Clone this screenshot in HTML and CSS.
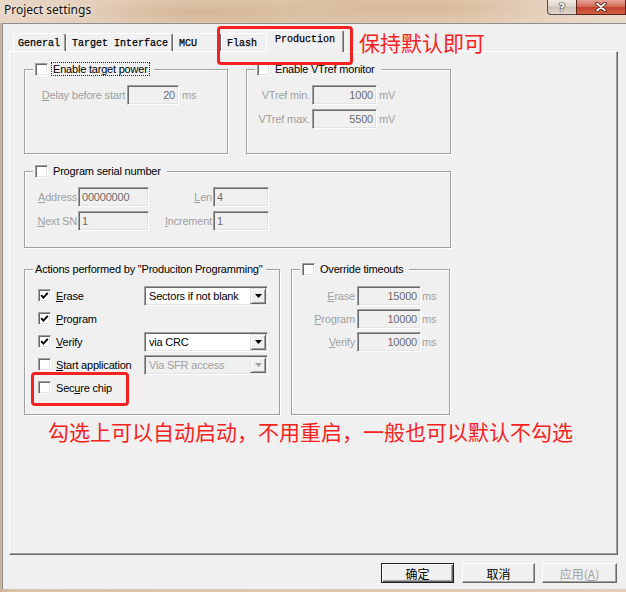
FILE: index.html
```html
<!DOCTYPE html>
<html>
<head>
<meta charset="utf-8">
<title>Project settings</title>
<link rel="stylesheet" href="styles.css">
</head>
<body>
<div class="window">
  <div class="titlebar">
    <span class="title">Project settings</span>
    <div class="caption">
      <span class="cap help">?</span>
      <span class="cap close">
        <svg width="14" height="10" viewBox="0 0 14 10"><path d="M3 1.5 L11 8.5 M11 1.5 L3 8.5" stroke="#4a1a12" stroke-width="3.6" stroke-linecap="round"/><path d="M3 1.5 L11 8.5 M11 1.5 L3 8.5" stroke="#fff" stroke-width="1.8" stroke-linecap="round"/></svg>
      </span>
    </div>
  </div>
  <div class="client">
    <div class="tabstrip">
      <span class="tab t-general">General</span>
      <span class="tab t-target">Target Interface</span>
      <span class="tab t-mcu">MCU</span>
      <span class="mark">
        <span class="tab t-flash">Flash</span>
        <span class="tab t-prod active">Production</span>
        <span class="note-tab">保持默认即可</span>
      </span>
    </div>
    <div class="panel">
      <div class="grow row-a">
        <fieldset class="group g-power">
          <legend><span class="cb"></span><span class="lg focus">Enable target power</span></legend>
          <div class="gbody b-top">
            <div class="field">
              <span class="lbl dis w100"><u>D</u>elay before start</span>
              <span class="edit w52">20</span>
              <span class="unit dis u3">ms</span>
            </div>
          </div>
        </fieldset>
        <fieldset class="group g-vtref">
          <legend><span class="cb"></span><span class="lg">Enable VTref monitor</span></legend>
          <div class="gbody b-top stack">
            <div class="field">
              <span class="lbl dis w63">VTref min.</span>
              <span class="edit w65">1000</span>
              <span class="unit dis u2">mV</span>
            </div>
            <div class="field">
              <span class="lbl dis w63">VTref max.</span>
              <span class="edit w65">5500</span>
              <span class="unit dis u2">mV</span>
            </div>
          </div>
        </fieldset>
      </div>

      <div class="grow row-b">
        <fieldset class="group g-serial">
          <legend><span class="cb"></span><span class="lg">Program serial number</span></legend>
          <div class="gbody b-serial stack">
            <div class="field">
              <span class="lbl dis w52 m1"><u>A</u>ddress</span>
              <span class="edit w71 left">00000000</span>
              <span class="lbl dis w63 m1"><u>L</u>en</span>
              <span class="edit w56 left">4</span>
            </div>
            <div class="field">
              <span class="lbl dis w52 m1"><u>N</u>ext SN</span>
              <span class="edit w71 left">1</span>
              <span class="lbl dis w63 m1"><u>I</u>ncrement</span>
              <span class="edit w56 left">1</span>
            </div>
          </div>
        </fieldset>
      </div>

      <div class="grow row-c">
        <fieldset class="group g-actions">
          <legend class="plain"><span class="lg">Actions performed by "Produciton Programming"</span></legend>
          <div class="gbody b-actions">
            <div class="act-row">
              <span class="cb"><svg width="9" height="9" viewBox="0 0 9 9"><path d="M1.2 4.2 L3.4 6.6 L7.8 1.8" fill="none" stroke="#000" stroke-width="1.9"/></svg></span>
              <span class="act-label"><u>E</u>rase</span>
              <span class="combo"><span class="ctext">Sectors if not blank</span><span class="dropbtn"><svg width="7" height="4" viewBox="0 0 7 4"><path d="M0 0 H7 L3.5 4 Z" fill="#000"/></svg></span></span>
            </div>
            <div class="act-row">
              <span class="cb"><svg width="9" height="9" viewBox="0 0 9 9"><path d="M1.2 4.2 L3.4 6.6 L7.8 1.8" fill="none" stroke="#000" stroke-width="1.9"/></svg></span>
              <span class="act-label"><u>P</u>rogram</span>
            </div>
            <div class="act-row">
              <span class="cb"><svg width="9" height="9" viewBox="0 0 9 9"><path d="M1.2 4.2 L3.4 6.6 L7.8 1.8" fill="none" stroke="#000" stroke-width="1.9"/></svg></span>
              <span class="act-label"><u>V</u>erify</span>
              <span class="combo"><span class="ctext">via CRC</span><span class="dropbtn"><svg width="7" height="4" viewBox="0 0 7 4"><path d="M0 0 H7 L3.5 4 Z" fill="#000"/></svg></span></span>
            </div>
            <div class="act-row">
              <span class="cb"></span>
              <span class="act-label"><u>S</u>tart application</span>
              <span class="combo disabled"><span class="ctext">Via SFR access</span><span class="dropbtn"><svg width="7" height="4" viewBox="0 0 7 4"><path d="M0 0 H7 L3.5 4 Z" fill="#a0a0a0"/></svg></span></span>
            </div>
            <div class="act-row">
              <span class="secure">
                <span class="cb"></span>
                <span class="act-label">Sec<u>u</u>re chip</span>
              </span>
            </div>
          </div>
        </fieldset>
        <fieldset class="group g-timeouts">
          <legend><span class="cb"></span><span class="lg">Override timeouts</span></legend>
          <div class="gbody b-timeouts stack3">
            <div class="field">
              <span class="lbl dis w63"><u>E</u>rase</span>
              <span class="edit w64">15000</span>
              <span class="unit dis u1">ms</span>
            </div>
            <div class="field">
              <span class="lbl dis w63"><u>P</u>rogram</span>
              <span class="edit w64">10000</span>
              <span class="unit dis u1">ms</span>
            </div>
            <div class="field">
              <span class="lbl dis w63"><u>V</u>erify</span>
              <span class="edit w64">10000</span>
              <span class="unit dis u1">ms</span>
            </div>
          </div>
        </fieldset>
      </div>

      <p class="note-big">勾选上可以自动启动，不用重启，一般也可以默认不勾选</p>
    </div>
    <div class="btns">
      <span class="btn default">确定</span>
      <span class="btn b-cancel">取消</span>
      <span class="btn b-apply dis">应用(<u>A</u>)</span>
    </div>
  </div>
</div>
</body>
</html>
```

FILE: styles.css
```css
* { box-sizing: border-box; }

html, body {
  margin: 0;
  padding: 0;
}

body {
  width: 626px;
  height: 592px;
  overflow: hidden;
  background: #dcc6ad;
  font-family: "Liberation Sans", Arial, sans-serif;
  font-size: 11px;
  color: #000;
}

.window {
  width: 626px;
  height: 592px;
  background: linear-gradient(90deg, #cbb39a 0%, #d9c2a8 2%, #e2cdb6 100%);
}

/* ---------- title bar ---------- */
.titlebar {
  height: 23px;
  display: flex;
  align-items: flex-start;
  background:
    radial-gradient(ellipse 120px 14px at 200px 12px, rgba(200,160,120,.45), transparent),
    radial-gradient(ellipse 140px 16px at 420px 8px, rgba(205,165,125,.45), transparent),
    linear-gradient(90deg, #e8d7c6 0%, #e0c9b1 25%, #dcc2a6 50%, #e2cbb3 75%, #eadbcc 100%);
}

.title {
  font-family: "Noto Sans", "Open Sans", sans-serif;
  font-size: 12px;
  line-height: 16px;
  padding: 2px 0 0 4px;
  color: #151515;
  text-shadow: 0 0 6px rgba(255,255,255,.85);
}

.caption {
  margin-left: auto;
  display: flex;
}

.cap {
  height: 15px;
  display: flex;
  align-items: center;
  justify-content: center;
  border: 1px solid #5b4d43;
  border-top: none;
}

.help {
  width: 29px;
  border-right: none;
  border-radius: 0 0 0 4px;
  background: linear-gradient(#f1ebe5, #ddd3ca 48%, #cfc3b8 52%, #dfd5cc);
  color: #fff;
  font-family: "DejaVu Sans", sans-serif;
  font-weight: bold;
  font-size: 11px;
  line-height: 11px;
  text-shadow: 0 0 1px #222, 0 0 1px #222, 0 0 2px #444;
}

.close {
  width: 50px;
  border-color: #5a2219;
  background: linear-gradient(#e6a396, #d56e5c 45%, #c4432f 52%, #d2623f);
}

/* ---------- client ---------- */
.client {
  margin-left: 2px;
  width: 624px;
  height: 566px;
  background: #f0f0f0;
  border-top: 1px solid #8f8f8f;
  border-left: 1px solid #8f8f8f;
}

.tabstrip {
  position: relative;
  z-index: 2;
  display: flex;
  align-items: flex-end;
  height: 21px;
  margin: 6px 0 0 6px;
  padding-left: 4px;
}

.tab {
  flex: none;
  height: 18px;
  padding: 4px 0 0 4px;
  font-family: "Liberation Mono", "Courier New", monospace;
  font-size: 10px;
  line-height: 12px;
  color: #000;
  background: #f0f0f0;
  border-top: 1px solid #fff;
  border-left: 1px solid #fff;
  border-right: 1px solid #696969;
  box-shadow: inset -1px 0 #a0a0a0;
  border-radius: 2px 2px 0 0;
  white-space: nowrap;
  -webkit-text-stroke: 0.25px #000;
}

.t-general { width: 53px; }
.t-target { width: 107px; padding-left: 5px; }
.t-mcu { width: 48px; padding-left: 5px; }
.t-flash { width: 47px; padding-left: 5px; }
.t-prod { width: 78px; }

.tab.active {
  height: 22px;
  margin: 0 -2px -1px -2px;
  padding: 3px 0 0 8px;
}

.mark {
  position: relative;
  display: flex;
  align-items: flex-end;
  height: 21px;
}

.mark::after {
  content: "";
  position: absolute;
  left: -4px;
  top: -4px;
  width: 130px;
  height: 33px;
  border: 3px solid #f52222;
  border-radius: 4px;
}

.note-tab {
  position: absolute;
  left: 138px;
  top: 0;
  white-space: nowrap;
  color: #f52222;
  font-family: "Noto Sans CJK SC", sans-serif;
  font-size: 21px;
  line-height: 24px;
}

/* ---------- tab panel ---------- */
.panel {
  position: relative;
  z-index: 1;
  margin-left: 6px;
  width: 609px;
  height: 504px;
  border-top: 1px solid #fff;
  border-left: 1px solid #fff;
  border-right: 1px solid #696969;
  border-bottom: 1px solid #696969;
  box-shadow: inset -1px -1px #a0a0a0;
  letter-spacing: -0.2px;
}

.grow {
  display: flex;
  padding-left: 14px;
}

.row-a { padding-top: 10px; gap: 18px; }
.row-b { margin-top: 10px; }
.row-c { margin-top: 14px; gap: 11px; }

fieldset.group {
  margin: 0;
  padding: 0;
  min-width: 0;
  border: 1px solid #a0a0a0;
  box-shadow: 1px 1px 0 #fff, inset 1px 1px 0 #fff;
}

.g-power { width: 204px; }
.g-vtref { width: 205px; }
.g-serial { width: 427px; }
.g-actions { width: 256px; }
.g-timeouts { width: 159px; }

legend {
  margin-left: 8px;
  padding: 0 4px 0 2px;
  height: 14px;
  display: flex;
  align-items: center;
  gap: 3px;
  background: #f0f0f0;
}

.lg {
  height: 14px;
  line-height: 12px;
  padding: 0 1px;
  border: 1px solid transparent;
  white-space: nowrap;
}

.lg.focus { border: 1px dotted #222; }

legend.plain .lg { border: none; padding: 1px 0 0 0; }

.gbody { display: flex; flex-direction: column; }
.b-top { height: 77px; padding-top: 9px; }
.b-serial { height: 69px; padding-top: 9px; }
.b-actions { height: 138px; padding: 8px 0 0 13px; }
.b-timeouts { height: 138px; padding-top: 10px; }

.stack { gap: 4px; }
.stack3 { gap: 3px; }

.field {
  display: flex;
  align-items: center;
  height: 20px;
}

.lbl {
  flex: none;
  text-align: right;
  white-space: nowrap;
  margin-right: 2px;
}

.lbl.m1 { margin-right: 1px; }

.dis { color: #a0a0a0; }

.w100 { width: 100px; }
.w63 { width: 63px; }
.w52 { width: 52px; }

.edit {
  flex: none;
  height: 20px;
  display: flex;
  align-items: center;
  justify-content: flex-end;
  padding-right: 3px;
  background: #f0f0f0;
  color: #6d6d6d;
  border: 1px solid;
  border-color: #a0a0a0 #fff #fff #a0a0a0;
  box-shadow: inset 1px 1px #696969, inset -1px -1px #e3e3e3;
  white-space: nowrap;
}

.edit.left { justify-content: flex-start; padding: 0 0 0 3px; }

.edit.w52 { width: 52px; }
.edit.w65 { width: 65px; }
.edit.w71 { width: 71px; }
.edit.w56 { width: 56px; }
.edit.w64 { width: 64px; }

.unit { white-space: nowrap; }
.u1 { margin-left: 1px; }
.u2 { margin-left: 2px; }
.u3 { margin-left: 3px; }

/* checkbox */
.cb {
  flex: none;
  width: 13px;
  height: 13px;
  display: flex;
  align-items: center;
  justify-content: center;
  background: #fff;
  border: 1px solid;
  border-color: #a0a0a0 #fff #fff #a0a0a0;
  box-shadow: inset 1px 1px #696969, inset -1px -1px #e3e3e3;
}

.cb svg { display: block; }

/* actions rows */
.act-row {
  display: flex;
  align-items: center;
  height: 23px;
}

.act-row > .cb { margin-right: 5px; }

.act-label {
  flex: none;
  width: 88px;
  white-space: nowrap;
}

.secure {
  position: relative;
  align-self: stretch;
  display: flex;
  align-items: center;
}

.secure .cb { margin-right: 5px; }
.secure .act-label { width: auto; }

.secure::after {
  content: "";
  position: absolute;
  left: -7px;
  top: -4px;
  width: 92px;
  height: 28px;
  border: 3px solid #f52222;
  border-radius: 4px;
}

.combo {
  flex: none;
  width: 124px;
  height: 20px;
  display: flex;
  align-items: center;
  padding: 0 1px 0 4px;
  background: #fff;
  border: 1px solid;
  border-color: #a0a0a0 #fff #fff #a0a0a0;
  box-shadow: inset 1px 1px #696969, inset -1px -1px #e3e3e3;
}

.combo.disabled { background: #f0f0f0; color: #a0a0a0; }

.ctext { white-space: nowrap; }

.dropbtn {
  margin-left: auto;
  width: 16px;
  height: 16px;
  display: flex;
  align-items: center;
  justify-content: center;
  background: #f0f0f0;
  border: 1px solid;
  border-color: #e3e3e3 #696969 #696969 #e3e3e3;
  box-shadow: inset 1px 1px #fff, inset -1px -1px #a0a0a0;
}

.dropbtn svg { display: block; }

/* big note */
.note-big {
  margin: 2px 0 0 38px;
  color: #f52222;
  font-family: "Noto Sans CJK SC", sans-serif;
  font-size: 21px;
  line-height: 28px;
  letter-spacing: 0;
  white-space: nowrap;
}

/* buttons */
.btns {
  display: flex;
  justify-content: flex-end;
  width: 609px;
  margin: 8px 0 0 6px;
  padding-right: 1px;
}

.btn {
  flex: none;
  width: 73px;
  height: 20px;
  display: flex;
  align-items: center;
  justify-content: center;
  font-family: "Noto Sans CJK SC", sans-serif;
  font-size: 12px;
  background: #f0f0f0;
  border: 1px solid;
  border-color: #fff #696969 #696969 #fff;
  box-shadow: inset -1px -1px #a0a0a0;
}

.btn.default {
  border: 1px solid #1e1e1e;
  box-shadow: inset 1px 1px #fff, inset -1px -1px #696969, inset -2px -2px #a0a0a0;
}

.b-cancel { margin-left: 8px; }
.b-apply { margin-left: 7px; width: 75px; color: #a0a0a0; }
```
